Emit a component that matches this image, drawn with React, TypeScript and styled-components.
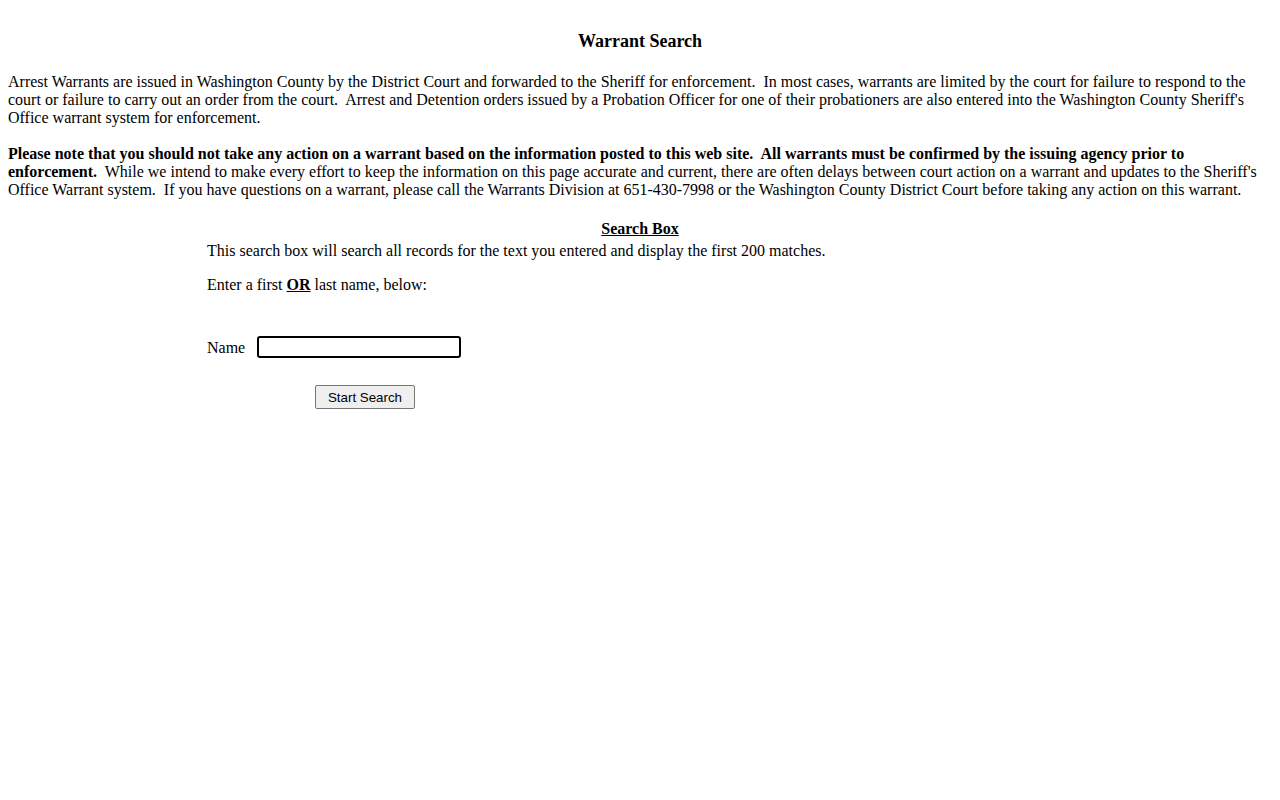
import styled, { createGlobalStyle } from "styled-components";

const GlobalStyle = createGlobalStyle`
  body {
    margin: 8px;
    background: #ffffff;
    color: #000000;
    font-family: "Liberation Serif", "Times New Roman", serif;
    font-size: 16px;
    line-height: 18px;
  }
`;

const Title = styled.h4`
  margin: 23px 0 21px;
  font-size: 18px;
  line-height: 21px;
  font-weight: bold;
  text-align: center;
`;

const Paragraph = styled.p`
  margin: 18px 0;
`;

const SearchSection = styled.div`
  width: 866px;
  margin: 21px auto 0;
`;

const SearchHeading = styled.div`
  font-weight: bold;
  text-decoration: underline;
  text-align: center;
`;

const Note = styled.p<{ $gap?: number }>`
  margin: ${(p) => p.$gap ?? 0}px 0 0;
`;

const FormRow = styled.label`
  display: flex;
  align-items: center;
  gap: 12px;
  margin-top: 42px;
  width: 316px;
`;

const NameText = styled.span`
  padding-top: 1px;
`;

const NameInput = styled.input`
  width: 204px;
  height: 22px;
  box-sizing: border-box;
  border: 2px solid #000000;
  border-radius: 3px;
  padding: 1px 4px;
  font-family: "Liberation Sans", Arial, sans-serif;
  font-size: 13.33px;
  &:focus {
    outline: none;
  }
`;

const ButtonRow = styled.div`
  display: flex;
  justify-content: center;
  width: 316px;
  margin-top: 27px;
`;

const SearchButton = styled.button`
  width: 100px;
  height: 24px;
  box-sizing: border-box;
  background: #efefef;
  border: 1px solid #767676;
  border-radius: 2px;
  font-family: "Liberation Sans", Arial, sans-serif;
  font-size: 13.33px;
  color: #000000;
  padding: 1px 6px;
  cursor: pointer;
`;

export default function App() {
  return (
    <>
      <GlobalStyle />
      <Title>Warrant Search</Title>
      <Paragraph>
        Arrest Warrants are issued in Washington County by the District Court
        and forwarded to the Sheriff for enforcement.&nbsp; In most cases,
        warrants are limited by the court for failure to respond to the court
        or failure to carry out an order from the court.&nbsp; Arrest and
        Detention orders issued by a Probation Officer for one of their
        probationers are also entered into the Washington County Sheriff's
        Office warrant system for enforcement.
      </Paragraph>
      <Paragraph>
        <b>
          Please note that you should not take any action on a warrant based on
          the information posted to this web site.&nbsp; All warrants must be
          confirmed by the issuing agency prior to enforcement.
        </b>
        &nbsp; While we intend to make every effort to keep the information on
        this page accurate and current, there are often delays between court
        action on a warrant and updates to the Sheriff's Office Warrant
        system.&nbsp; If you have questions on a warrant, please call the
        Warrants Division at 651-430-7998 or the Washington County District
        Court before taking any action on this warrant.
      </Paragraph>
      <SearchSection>
        <SearchHeading>Search Box</SearchHeading>
        <Note $gap={4}>
          This search box will search all records for the text you entered and
          display the first 200 matches.
        </Note>
        <Note $gap={16}>
          Enter a first{" "}
          <b>
            <u>OR</u>
          </b>{" "}
          last name, below:
        </Note>
        <FormRow>
          <NameText>Name</NameText>
          <NameInput type="text" autoFocus />
        </FormRow>
        <ButtonRow>
          <SearchButton type="button">Start Search</SearchButton>
        </ButtonRow>
      </SearchSection>
    </>
  );
}
